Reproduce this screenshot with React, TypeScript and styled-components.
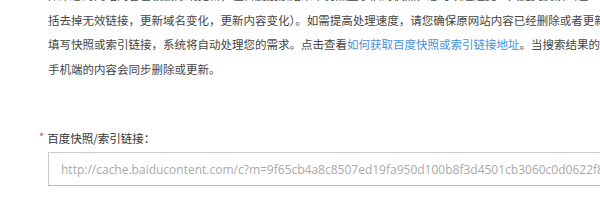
import { FC } from 'react';
import styled, { createGlobalStyle } from 'styled-components';

const GlobalStyle = createGlobalStyle`
  html, body {
    margin: 0;
    padding: 0;
    background: #fff;
    overflow: hidden;
  }
`;

const Page = styled.div`
  width: 600px;
  height: 207px;
  overflow: hidden;
  padding-left: 48px;
  box-sizing: border-box;
  font-family: 'Noto Sans CJK SC', 'Noto Sans', sans-serif;
`;

const Desc = styled.p`
  margin: -17px 0 0;
  font-size: 11.5px;
  line-height: 24.5px;
  color: #444;
  white-space: nowrap;
`;

const Link = styled.a`
  color: #4a8fdb;
  text-decoration: none;
`;

const FormItem = styled.div`
  margin-top: 48.5px;
`;

const Label = styled.label`
  display: flex;
  align-items: center;
  margin-left: -9px;
  font-size: 11.5px;
  line-height: 16px;
  color: #333;
`;

const Required = styled.span`
  color: #e8403a;
  font-size: 11px;
  margin-right: 3px;
  position: relative;
  top: -2px;
`;

const Input = styled.input`
  display: block;
  margin-top: 6.5px;
  width: 700px;
  height: 34px;
  box-sizing: border-box;
  padding: 0 12px;
  border: 1px solid #ccc;
  border-bottom-color: #bbb;
  font-family: 'Open Sans', 'Noto Sans', sans-serif;
  font-size: 12px;
  color: #333;
  outline: none;

  &::placeholder {
    color: #a9a9a9;
  }
`;

const App: FC = () => {
  return (
    <Page>
      <GlobalStyle />
      <Desc>
        如果您的网站内容已被删除或更新，但百度搜索结果中仍然显示旧的快照，您可以通过此工具提交反馈（包
        <br />
        括去掉无效链接，更新域名变化，更新内容变化）。如需提高处理速度，请您确保原网站内容已经删除或者更新
        <br />
        填写快照或索引链接，系统将自动处理您的需求。点击查看<Link href="#">如何获取百度快照或索引链接地址</Link>。当搜索结果的
        <br />
        手机端的内容会同步删除或更新。
      </Desc>
      <FormItem>
        <Label>
          <Required>*</Required>百度快照/索引链接：
        </Label>
        <Input placeholder="http://cache.baiducontent.com/c?m=9f65cb4a8c8507ed19fa950d100b8f3d4501cb3060c0d0622f8" />
      </FormItem>
    </Page>
  );
};

export default App;
